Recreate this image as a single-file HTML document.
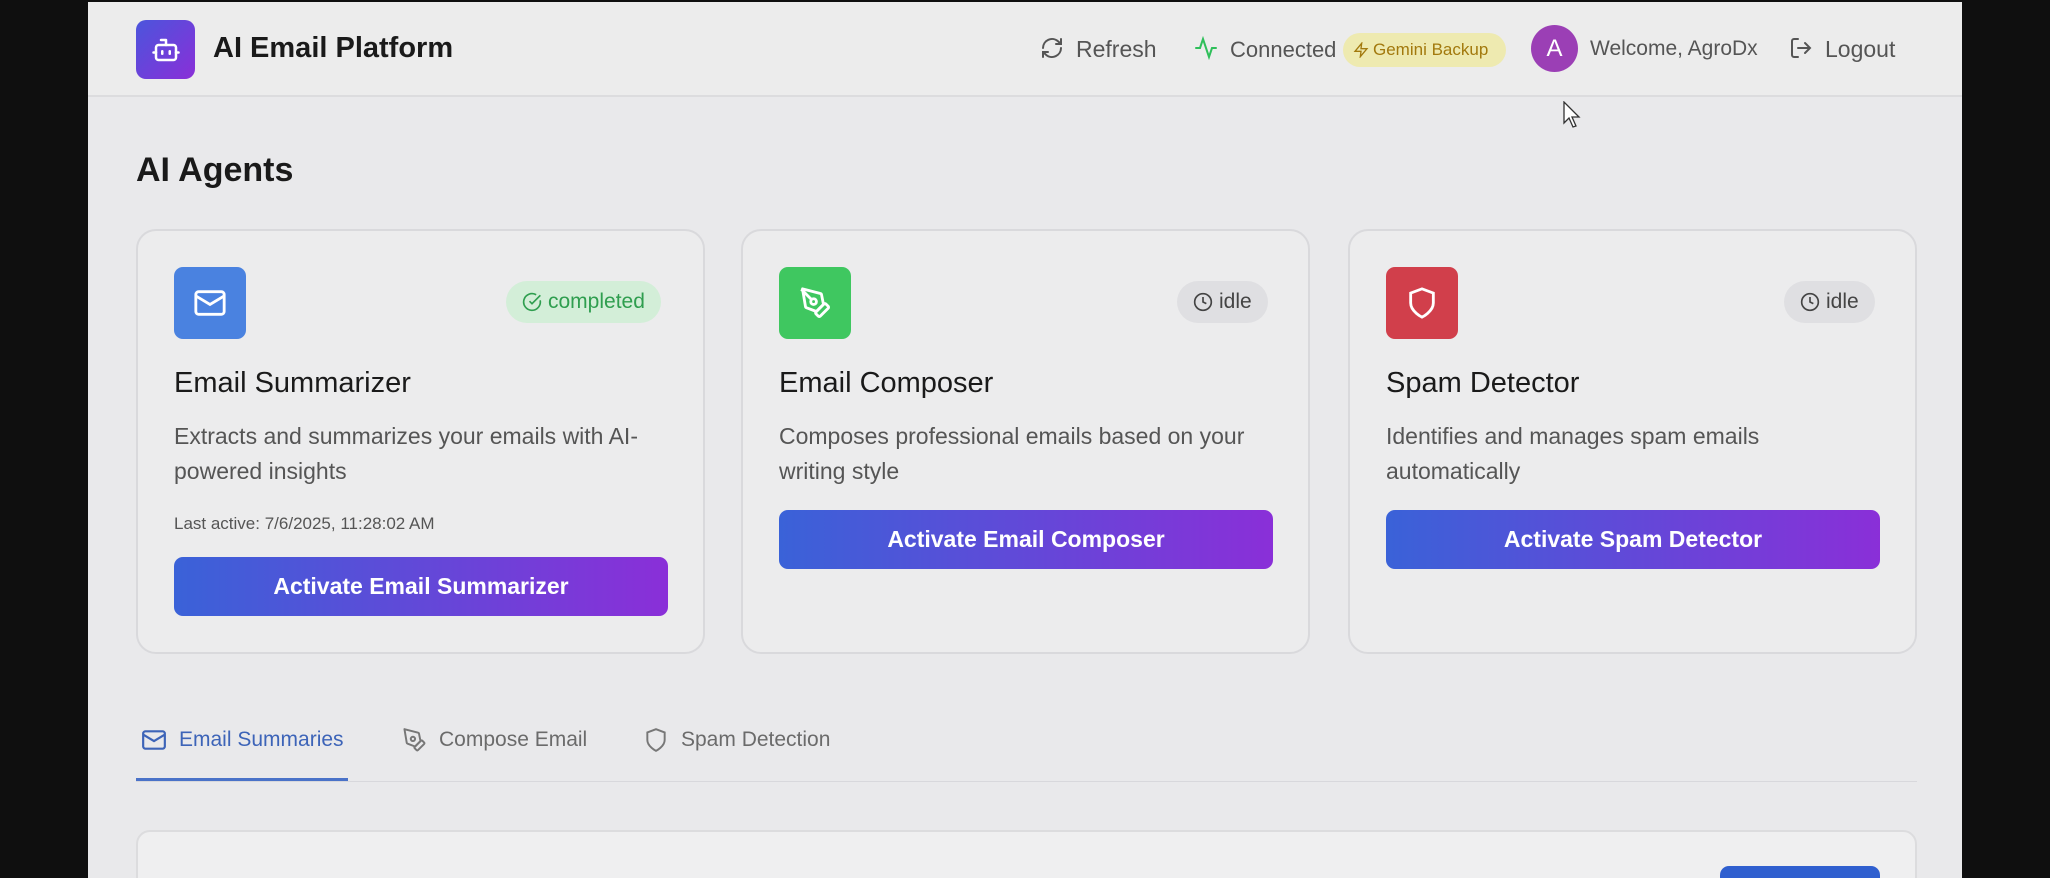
<!DOCTYPE html>
<html style="overflow:hidden;height:878px"><head><meta charset="utf-8"><style>
*{margin:0;padding:0;box-sizing:border-box}
body{width:2050px;height:878px;background:#0f0f0f;font-family:"Liberation Sans",sans-serif;position:relative;overflow:hidden}
.page{position:absolute;left:88px;top:2px;width:1874px;height:876px;background:#e9e9eb;overflow:hidden}
.hdr{position:absolute;left:88px;top:2px;width:1874px;height:95px;background:#ececec;border-bottom:2px solid #dcdcde}
.a{position:absolute}
.t{position:absolute;white-space:nowrap}
.card{position:absolute;top:229px;width:569px;height:425px;border:2px solid #d9d9dc;border-radius:20px;background:#ececed}
.ib{position:absolute;left:36px;top:36px;width:72px;height:72px;border-radius:9px;display:flex;align-items:center;justify-content:center}
.badge{position:absolute;top:50px;height:42px;border-radius:21px;background:#dfdfe2;font-size:21px;color:#444;display:flex;align-items:center;padding:0 16px;gap:6px}
.ct{position:absolute;left:36px;top:136px;font-size:29px;color:#1a1a1a;font-weight:500}
.cd{position:absolute;left:36px;top:188px;width:500px;font-size:23px;line-height:35px;color:#555}
.btn{position:absolute;left:36px;width:494px;height:59px;border-radius:9px;background:linear-gradient(90deg,#3a62d8,#8a2fd8);color:#fff;font-size:23px;font-weight:bold;display:flex;align-items:center;justify-content:center}
.tab{position:absolute;top:727px;font-size:21px;display:flex;align-items:center;gap:12px;color:#6b6b6b}
</style></head><body>
<div class="page">
<div class="a" style="left:48px;top:828px;width:1781px;height:80px;border:2px solid #dcdcde;border-radius:14px;background:#efeff0"></div>
<div class="a" style="left:1632px;top:864px;width:160px;height:40px;border-radius:9px;background:#2f5fcf"></div>
</div>
<div class="hdr"></div>
<div class="a" style="left:136px;top:20px;width:59px;height:59px;border-radius:10px;background:linear-gradient(135deg,#4b55dc,#8a2fd8);display:flex;align-items:center;justify-content:center">
<svg width="30" height="30" viewBox="0 0 24 24" fill="none" stroke="#fff" stroke-width="2" stroke-linecap="round" stroke-linejoin="round"><path d="M12 8V4H8"/><rect x="4" y="8" width="16" height="12" rx="2"/><path d="M2 14h2M20 14h2M15 13v2M9 13v2"/></svg></div>
<div class="t" style="left:213px;top:32px;font-size:29px;font-weight:bold;color:#1a1a1a">AI Email Platform</div>
<svg class="a" style="left:1040px;top:36px" width="24" height="24" viewBox="0 0 24 24" fill="none" stroke="#555" stroke-width="2" stroke-linecap="round"><path d="M3 12a9 9 0 0 1 15-6.7L21 8M21 3v5h-5M21 12a9 9 0 0 1-15 6.7L3 16M8 16H3v5"/></svg>
<div class="t" style="left:1076px;top:36px;font-size:23px;color:#555">Refresh</div>
<svg class="a" style="left:1194px;top:36px" width="24" height="24" viewBox="0 0 24 24" fill="none" stroke="#2fbf5a" stroke-width="2" stroke-linecap="round"><path d="M22 12h-4l-3 9L9 3l-3 9H2"/></svg>
<div class="t" style="left:1230px;top:37px;font-size:22px;color:#555">Connected</div>
<div class="a" style="left:1343px;top:33px;width:163px;height:34px;border-radius:17px;background:#eeeab0;color:#a2790d;font-size:17px;display:flex;align-items:center;padding-left:10px;gap:4px"><svg width="16" height="16" viewBox="0 0 24 24" fill="none" stroke="#a2790d" stroke-width="2"><path d="M13 2L3 14h9l-1 8 10-12h-9z"/></svg>Gemini Backup</div>
<div class="a" style="left:1531px;top:25px;width:47px;height:47px;border-radius:50%;background:#9b3fb5;color:#fff;font-size:24px;display:flex;align-items:center;justify-content:center">A</div>
<div class="t" style="left:1590px;top:37px;font-size:21px;color:#555">Welcome, AgroDx</div>
<svg class="a" style="left:1789px;top:36px" width="24" height="24" viewBox="0 0 24 24" fill="none" stroke="#555" stroke-width="2" stroke-linecap="round"><path d="M9 21H5a2 2 0 0 1-2-2V5a2 2 0 0 1 2-2h4M16 17l5-5-5-5M21 12H9"/></svg>
<div class="t" style="left:1825px;top:36px;font-size:23px;color:#555">Logout</div>
<svg class="a" style="left:1563px;top:101px" width="20" height="28" viewBox="0 0 20 28"><path d="M1 1v21l5-5 4 9 3-1-4-9h7z" fill="#fff" stroke="#333" stroke-width="1.3"/></svg>
<div class="t" style="left:136px;top:151px;font-size:34px;font-weight:bold;color:#1a1a1a">AI Agents</div>

<div class="card" style="left:136px">
<div class="ib" style="background:#4a82e0"><svg width="34" height="34" viewBox="0 0 24 24" fill="none" stroke="#fff" stroke-width="2"><rect x="2" y="4" width="20" height="16" rx="2"/><path d="M22 7l-10 6L2 7"/></svg></div>
<div class="badge" style="left:368px;background:#d3eed8;color:#2f9e4f"><svg width="20" height="20" viewBox="0 0 24 24" fill="none" stroke="#2f9e4f" stroke-width="2"><path d="M21.8 10A10 10 0 1 1 17 3.3"/><path d="M9 11l3 3L22 4"/></svg>completed</div>
<div class="ct">Email Summarizer</div>
<div class="cd">Extracts and summarizes your emails with AI-powered insights</div>
<div class="t" style="left:36px;top:283px;font-size:17px;color:#555">Last active: 7/6/2025, 11:28:02 AM</div>
<div class="btn" style="top:326px">Activate Email Summarizer</div>
</div>

<div class="card" style="left:741px">
<div class="ib" style="background:#3fc760"><svg width="34" height="34" viewBox="0 0 24 24" fill="none" stroke="#fff" stroke-width="2" stroke-linejoin="round"><path d="M15.7 21.3a1 1 0 0 1-1.4 0l-1.6-1.6a1 1 0 0 1 0-1.4l5.6-5.6a1 1 0 0 1 1.4 0l1.6 1.6a1 1 0 0 1 0 1.4z"/><path d="M18 13l-1.4-6.9a1 1 0 0 0-.8-.8L3.2 2 5.3 14.6a1 1 0 0 0 .8.8L13 18z"/><path d="M2.3 2.3l7.3 7.3"/><circle cx="11" cy="11" r="2"/></svg></div>
<div class="badge" style="left:434px"><svg width="20" height="20" viewBox="0 0 24 24" fill="none" stroke="#444" stroke-width="2"><circle cx="12" cy="12" r="10"/><path d="M12 6v6l4 2"/></svg>idle</div>
<div class="ct">Email Composer</div>
<div class="cd">Composes professional emails based on your writing style</div>
<div class="btn" style="top:279px">Activate Email Composer</div>
</div>

<div class="card" style="left:1348px">
<div class="ib" style="background:#d13f4b"><svg width="34" height="34" viewBox="0 0 24 24" fill="none" stroke="#fff" stroke-width="2"><path d="M12 22s8-4 8-10V5l-8-3-8 3v7c0 6 8 10 8 10z"/></svg></div>
<div class="badge" style="left:434px"><svg width="20" height="20" viewBox="0 0 24 24" fill="none" stroke="#444" stroke-width="2"><circle cx="12" cy="12" r="10"/><path d="M12 6v6l4 2"/></svg>idle</div>
<div class="ct">Spam Detector</div>
<div class="cd">Identifies and manages spam emails automatically</div>
<div class="btn" style="top:279px">Activate Spam Detector</div>
</div>

<div class="a" style="left:136px;top:781px;width:1781px;height:1px;background:#d8d8dc"></div>
<div class="a" style="left:136px;top:778px;width:212px;height:3px;background:#4a72c8"></div>
<div class="tab" style="left:141px;color:#3d64b8"><svg width="26" height="26" viewBox="0 0 24 24" fill="none" stroke="#3d64b8" stroke-width="2"><rect x="2" y="4" width="20" height="16" rx="2"/><path d="M22 7l-10 6L2 7"/></svg>Email Summaries</div>
<div class="tab" style="left:401px"><svg width="26" height="26" viewBox="0 0 24 24" fill="none" stroke="#777" stroke-width="1.8" stroke-linejoin="round"><path d="M15.7 21.3a1 1 0 0 1-1.4 0l-1.6-1.6a1 1 0 0 1 0-1.4l5.6-5.6a1 1 0 0 1 1.4 0l1.6 1.6a1 1 0 0 1 0 1.4z"/><path d="M18 13l-1.4-6.9a1 1 0 0 0-.8-.8L3.2 2 5.3 14.6a1 1 0 0 0 .8.8L13 18z"/><circle cx="11" cy="11" r="2"/></svg>Compose Email</div>
<div class="tab" style="left:643px"><svg width="26" height="26" viewBox="0 0 24 24" fill="none" stroke="#777" stroke-width="1.8"><path d="M12 22s8-4 8-10V5l-8-3-8 3v7c0 6 8 10 8 10z"/></svg>Spam Detection</div>
</body></html>
